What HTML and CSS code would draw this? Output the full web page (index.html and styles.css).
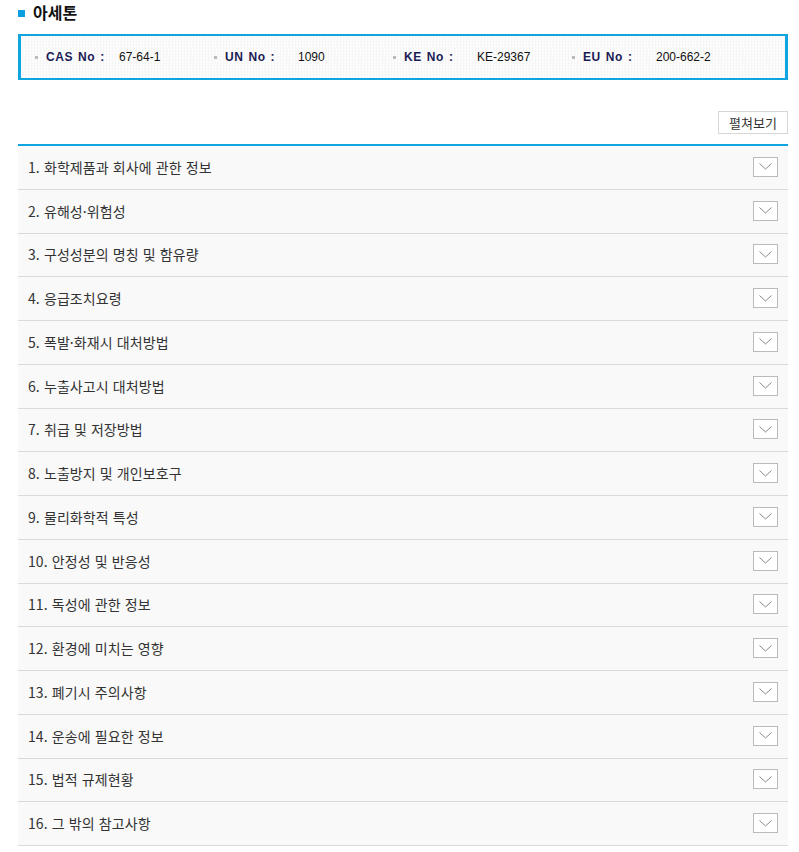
FILE: index.html
```html
<!DOCTYPE html>
<html lang="ko">
<head>
<meta charset="utf-8">
<title>아세톤</title>
<link rel="stylesheet" href="styles.css">
</head>
<body>
<div class="page">
  <h2 class="title"><span class="title-mark"></span>아세톤</h2>
  <div class="info-box">
    <div class="info-item"><span class="bullet"></span><span class="label">CAS No :</span><span class="value">67-64-1</span></div>
    <div class="info-item"><span class="bullet"></span><span class="label">UN No :</span><span class="value">1090</span></div>
    <div class="info-item"><span class="bullet"></span><span class="label">KE No :</span><span class="value">KE-29367</span></div>
    <div class="info-item"><span class="bullet"></span><span class="label">EU No :</span><span class="value">200-662-2</span></div>
  </div>
  <div class="toolbar"><button class="expand-btn">펼쳐보기</button></div>
  <ul class="accordion">
    <li class="acc-row"><span class="acc-title">1. 화학제품과 회사에 관한 정보</span><span class="toggle"><svg viewBox="0 0 13 7" width="13" height="7"><path d="M0.5 0.5 L6.5 6 L12.5 0.5" /></svg></span></li>
    <li class="acc-row"><span class="acc-title">2. 유해성·위험성</span><span class="toggle"><svg viewBox="0 0 13 7" width="13" height="7"><path d="M0.5 0.5 L6.5 6 L12.5 0.5" /></svg></span></li>
    <li class="acc-row"><span class="acc-title">3. 구성성분의 명칭 및 함유량</span><span class="toggle"><svg viewBox="0 0 13 7" width="13" height="7"><path d="M0.5 0.5 L6.5 6 L12.5 0.5" /></svg></span></li>
    <li class="acc-row"><span class="acc-title">4. 응급조치요령</span><span class="toggle"><svg viewBox="0 0 13 7" width="13" height="7"><path d="M0.5 0.5 L6.5 6 L12.5 0.5" /></svg></span></li>
    <li class="acc-row"><span class="acc-title">5. 폭발·화재시 대처방법</span><span class="toggle"><svg viewBox="0 0 13 7" width="13" height="7"><path d="M0.5 0.5 L6.5 6 L12.5 0.5" /></svg></span></li>
    <li class="acc-row"><span class="acc-title">6. 누출사고시 대처방법</span><span class="toggle"><svg viewBox="0 0 13 7" width="13" height="7"><path d="M0.5 0.5 L6.5 6 L12.5 0.5" /></svg></span></li>
    <li class="acc-row"><span class="acc-title">7. 취급 및 저장방법</span><span class="toggle"><svg viewBox="0 0 13 7" width="13" height="7"><path d="M0.5 0.5 L6.5 6 L12.5 0.5" /></svg></span></li>
    <li class="acc-row"><span class="acc-title">8. 노출방지 및 개인보호구</span><span class="toggle"><svg viewBox="0 0 13 7" width="13" height="7"><path d="M0.5 0.5 L6.5 6 L12.5 0.5" /></svg></span></li>
    <li class="acc-row"><span class="acc-title">9. 물리화학적 특성</span><span class="toggle"><svg viewBox="0 0 13 7" width="13" height="7"><path d="M0.5 0.5 L6.5 6 L12.5 0.5" /></svg></span></li>
    <li class="acc-row"><span class="acc-title">10. 안정성 및 반응성</span><span class="toggle"><svg viewBox="0 0 13 7" width="13" height="7"><path d="M0.5 0.5 L6.5 6 L12.5 0.5" /></svg></span></li>
    <li class="acc-row"><span class="acc-title">11. 독성에 관한 정보</span><span class="toggle"><svg viewBox="0 0 13 7" width="13" height="7"><path d="M0.5 0.5 L6.5 6 L12.5 0.5" /></svg></span></li>
    <li class="acc-row"><span class="acc-title">12. 환경에 미치는 영향</span><span class="toggle"><svg viewBox="0 0 13 7" width="13" height="7"><path d="M0.5 0.5 L6.5 6 L12.5 0.5" /></svg></span></li>
    <li class="acc-row"><span class="acc-title">13. 폐기시 주의사항</span><span class="toggle"><svg viewBox="0 0 13 7" width="13" height="7"><path d="M0.5 0.5 L6.5 6 L12.5 0.5" /></svg></span></li>
    <li class="acc-row"><span class="acc-title">14. 운송에 필요한 정보</span><span class="toggle"><svg viewBox="0 0 13 7" width="13" height="7"><path d="M0.5 0.5 L6.5 6 L12.5 0.5" /></svg></span></li>
    <li class="acc-row"><span class="acc-title">15. 법적 규제현황</span><span class="toggle"><svg viewBox="0 0 13 7" width="13" height="7"><path d="M0.5 0.5 L6.5 6 L12.5 0.5" /></svg></span></li>
    <li class="acc-row"><span class="acc-title">16. 그 밖의 참고사항</span><span class="toggle"><svg viewBox="0 0 13 7" width="13" height="7"><path d="M0.5 0.5 L6.5 6 L12.5 0.5" /></svg></span></li>
  </ul>
</div>
</body>
</html>
```

FILE: styles.css
```css
* { box-sizing: border-box; }
html, body { margin: 0; padding: 0; background: #fff; }
body {
  font-family: "Noto Sans CJK KR", "Noto Sans", sans-serif;
  color: #333;
}
.page {
  width: 770px;
  margin-left: 18px;
}
.title {
  display: flex;
  align-items: center;
  height: 24px;
  margin: 0;
  font-size: 16px;
  font-weight: 700;
  color: #111;
  line-height: 24px;
}
.title-mark {
  display: inline-block;
  width: 7px;
  height: 7px;
  background: #0aa0df;
  margin-right: 8px;
  margin-top: 2px;
}
.info-box {
  margin-top: 10px;
  height: 46px;
  border-style: solid;
  border-color: #0ea5e1;
  border-width: 2px 3px;
  background-color: #fdfdfd;
  background-image: repeating-conic-gradient(#f6f6f6 0 25%, #fefefe 0 50%);
  background-size: 3px 3px;
  display: flex;
  align-items: center;
  padding-left: 14px;
}
.info-item {
  display: flex;
  align-items: center;
  width: 179px;
  font-family: "Liberation Sans", Arial, sans-serif;
  font-size: 12px;
}
.bullet {
  width: 3px;
  height: 3px;
  background: #bbb;
  margin-right: 8px;
}
.label {
  width: 73px;
  font-weight: bold;
  color: #1c1c55;
  letter-spacing: 0.6px;
  word-spacing: 1px;
}
.value {
  color: #111;
}
.toolbar {
  display: flex;
  justify-content: flex-end;
  margin-top: 31px;
}
.expand-btn {
  width: 70px;
  height: 23px;
  border: 1px solid #d6d6d6;
  background: #fff;
  font-family: "Noto Sans CJK KR", sans-serif;
  font-size: 13px;
  color: #333;
  padding: 0;
  line-height: 20px;
}
.accordion {
  list-style: none;
  margin: 10px 0 0;
  padding: 0;
  border-top: 2px solid #0ea5e1;
}
.acc-row {
  height: 43.75px;
  background: #f9f9f9;
  border-bottom: 1px solid #dadada;
  display: flex;
  align-items: center;
  justify-content: space-between;
  padding: 0 10px 1px 10px;
}
.acc-title {
  font-size: 14px;
  color: #333;
  letter-spacing: 0.1px;
}
.toggle {
  width: 25px;
  height: 20px;
  border: 1px solid #bbb;
  background: #fff;
  display: flex;
  align-items: center;
  justify-content: center;
}
.toggle svg {
  fill: none;
  stroke: #888;
  stroke-width: 1;
}
```
